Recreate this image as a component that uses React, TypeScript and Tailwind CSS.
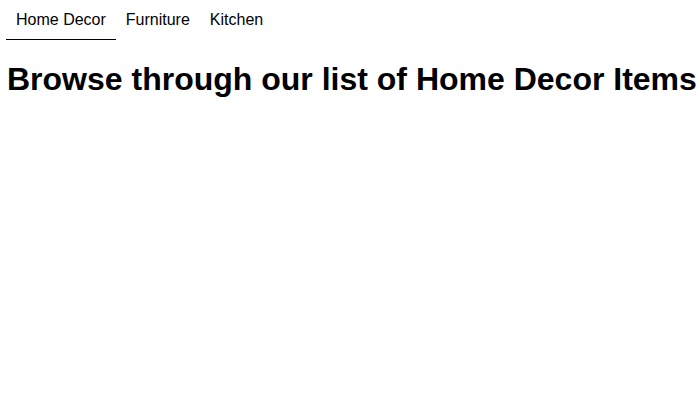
import { useState } from "react";

const tabs = ["Home Decor", "Furniture", "Kitchen"];

export default function App() {
  const [active, setActive] = useState("Home Decor");

  return (
    <div className="min-h-[400px] bg-white text-black font-['Liberation_Sans',Arial,sans-serif]">
      <div className="flex pl-[6px]">
        {tabs.map((tab) => (
          <button
            key={tab}
            onClick={() => setActive(tab)}
            className={`px-[10px] pt-[11px] pb-[10px] text-[16px] leading-[18px] border-b ${
              active === tab ? "border-black" : "border-transparent"
            }`}
          >
            {tab}
          </button>
        ))}
      </div>
      <h1 className="mt-[21px] ml-[7px] text-[32px] font-bold leading-[37px]">
        Browse through our list of {active} Items
      </h1>
    </div>
  );
}
